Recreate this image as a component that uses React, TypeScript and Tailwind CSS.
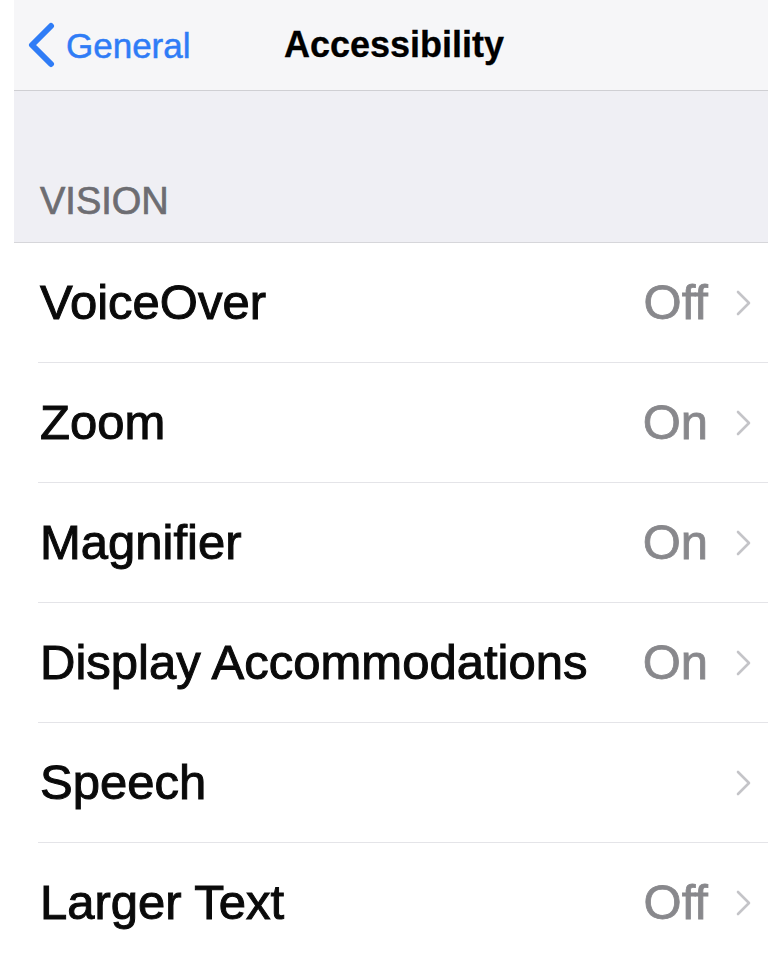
import React from "react";

const rows: { label: string; value?: string }[] = [
  { label: "VoiceOver", value: "Off" },
  { label: "Zoom", value: "On" },
  { label: "Magnifier", value: "On" },
  { label: "Display Accommodations", value: "On" },
  { label: "Speech" },
  { label: "Larger Text", value: "Off" },
];

function Chevron() {
  return (
    <svg width="17" height="26" viewBox="0 0 17 26" className="shrink-0">
      <path d="M3 2 L14 13 L3 24" fill="none" stroke="#c4c4c8" strokeWidth="2.6" strokeLinecap="round" strokeLinejoin="round" />
    </svg>
  );
}

export default function App() {
  return (
    <div className="w-[768px] h-[953px] overflow-hidden bg-white font-['Liberation_Sans',Arial,sans-serif]">
      <div className="pl-[14px] bg-white">
        <div className="h-[91px] bg-[#f6f6f8] border-b border-[#cfcfd3] grid grid-cols-[1fr_auto_1fr] items-center">
          <div className="flex items-center pl-[12px] gap-[10px] text-[#2f7cf6]">
            <svg width="30" height="46" viewBox="0 0 30 46" className="shrink-0">
              <path d="M25 4 L6 23 L25 42" fill="none" stroke="#2f7cf6" strokeWidth="6" strokeLinecap="round" strokeLinejoin="round" />
            </svg>
            <span className="text-[35px] leading-none [-webkit-text-stroke:0.5px_#2f7cf6]">General</span>
          </div>
          <div className="text-[36px] font-bold text-black leading-none pl-[6px] [-webkit-text-stroke:0.3px_black]">Accessibility</div>
          <div />
        </div>
        <div className="h-[152px] bg-[#efeff4] border-b border-[#d6d6da] flex items-end pl-[26px] pb-[22px]">
          <span className="text-[38px] leading-none text-[#6d6d72] [-webkit-text-stroke:0.7px_#6d6d72]">VISION</span>
        </div>
      </div>
      <div className="bg-white">
        {rows.map((r) => (
          <div key={r.label} className="h-[120px] flex flex-col">
            <div className="flex-1 flex items-center pl-[40px] pr-[16px]">
              <span className="flex-1 text-[49px] leading-none text-[#0a0a0a] [-webkit-text-stroke:1px_#0a0a0a]">{r.label}</span>
              {r.value && (
                <span className="text-[49px] leading-none text-[#88888c] [-webkit-text-stroke:0.8px_#88888c] mr-[27px]">{r.value}</span>
              )}
              <Chevron />
            </div>
            <div className="ml-[38px] h-px bg-[#e4e4e8]" />
          </div>
        ))}
      </div>
    </div>
  );
}
